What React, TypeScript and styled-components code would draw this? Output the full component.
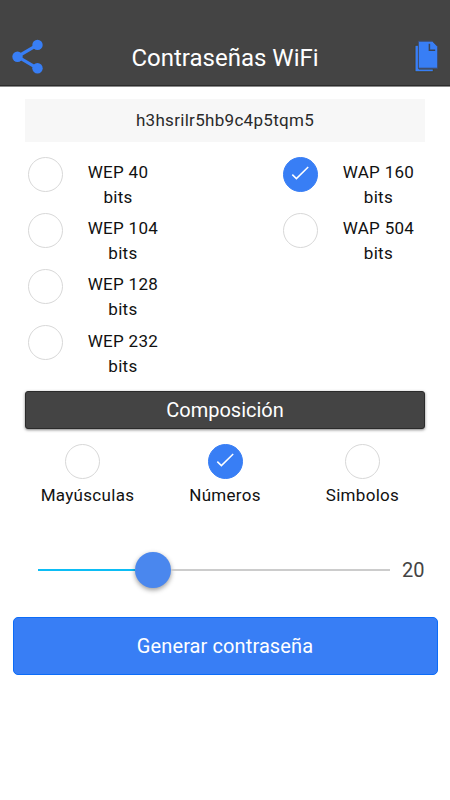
import React, { useState } from "react";
import styled, { createGlobalStyle } from "styled-components";

const GlobalStyle = createGlobalStyle`
  * { box-sizing: border-box; }
  body {
    margin: 0;
    background: #fff;
    color: #111;
    font-family: Roboto, "Liberation Sans", sans-serif;
  }
  button { font-family: inherit; }
`;

const Screen = styled.main`
  display: flex;
  flex-direction: column;
  width: 450px;
  height: 800px;
  overflow: hidden;
  background: #fff;
`;

const Header = styled.header`
  display: flex;
  align-items: flex-end;
  justify-content: space-between;
  height: 87px;
  padding: 0 10px 10px 10px;
  background: #444;
  border-bottom: 1px solid #8a8a8a;
  box-shadow: inset 0 -1px 0 #2c2c2c;
`;

const IconButton = styled.button`
  display: flex;
  width: 36px;
  height: 40px;
  padding: 0;
  border: 0;
  background: transparent;
  svg { display: block; }
`;

const Title = styled.h1`
  margin: 0;
  font-size: 24px;
  font-weight: 400;
  line-height: 36px;
  color: #fff;
`;

const Content = styled.section`
  display: flex;
  flex-direction: column;
  padding: 12px 25px 0;
`;

const Password = styled.output`
  height: 43px;
  line-height: 43px;
  text-align: center;
  font-size: 17px;
  letter-spacing: 0.3px;
  color: #2a2a2a;
  background: #f7f7f7;
`;

const Lengths = styled.div`
  display: grid;
  grid-template-columns: 255px 145px;
  grid-template-rows: repeat(4, 56.2px);
  grid-auto-flow: column;
  margin-top: 14.6px;
`;

const Option = styled.label`
  display: flex;
  align-items: flex-start;
  gap: 25.2px;
  padding-left: 2.5px;
`;

const OptionText = styled.span`
  padding-top: 3.4px;
  font-size: 17px;
  line-height: 25px;
  letter-spacing: 0.3px;
  text-align: center;
  white-space: pre-line;
`;

const Circle = styled.span<{ $on: boolean }>`
  display: flex;
  flex: none;
  align-items: center;
  justify-content: center;
  width: 35px;
  height: 35px;
  border: 1px solid ${(p) => (p.$on ? "#387ef5" : "#d8d8d8")};
  border-radius: 50%;
  background: ${(p) => (p.$on ? "#387ef5" : "#fff")};
`;

const SectionBar = styled.h2`
  height: 37.5px;
  margin: 10px 0 0;
  border: 1px solid #2b2b2b;
  border-radius: 3px;
  background: #444;
  box-shadow: 0 1px 3px rgba(0, 0, 0, 0.5);
  color: #fff;
  font-size: 20px;
  font-weight: 400;
  line-height: 36px;
  text-align: center;
`;

const Kinds = styled.div`
  display: grid;
  grid-template-columns: 125px 150px 125px;
  margin-top: 15px;
`;

const Kind = styled.label`
  display: flex;
  flex-direction: column;
  align-items: center;
  font-size: 17px;
  line-height: 25px;
  letter-spacing: 0.3px;
  gap: 4px;
  &:first-child > span { margin-right: 10px; }
`;

const SliderRow = styled.div`
  display: flex;
  align-items: center;
  height: 44px;
  margin: 40px 0 0 12.5px;
`;

const Track = styled.div`
  display: flex;
  align-items: center;
  width: 352px;
`;

const Line = styled.span<{ $w: number; $filled?: boolean }>`
  width: ${(p) => p.$w}px;
  height: 2.5px;
  background: ${(p) => (p.$filled ? "#0cbdf5" : "#ccc")};
`;

const Thumb = styled.span`
  width: 36px;
  height: 36px;
  border-radius: 50%;
  background: #4a87ee;
  box-shadow: 0 2px 5px rgba(0, 0, 0, 0.4);
`;

const Value = styled.span`
  margin-left: 12.5px;
  font-size: 20px;
  color: #444;
`;

const Generate = styled.button`
  height: 58px;
  margin: 25px 12.5px 0;
  padding: 0;
  border: 1px solid #0c6cf8;
  border-radius: 5px;
  background: #387ef5;
  color: #fff;
  font-size: 20px;
  letter-spacing: 0.1px;
`;

const ShareIcon = () => (
  <svg width="36" height="40" viewBox="0 0 36 40" fill="#387ef5">
    <path d="M27.5 8.8 7.5 20.6 27.5 32.3" fill="none" stroke="#387ef5" strokeWidth="3.2" />
    <circle cx="27.5" cy="8.9" r="5.2" />
    <circle cx="7.5" cy="20.7" r="5.2" />
    <circle cx="27.5" cy="32.3" r="5.2" />
  </svg>
);

const CopyIcon = () => (
  <svg width="36" height="40" viewBox="0 0 36 40">
    <path d="M11 9.2H14.8V33H29.3V35.8H11Z" fill="#387ef5" stroke="#443f29" />
    <path d="M14.4 5.2H28.3L33.6 10.7V32.2H14.4Z" fill="#387ef5" stroke="#3f4e70" />
    <path d="M25.4 7.8V14.2H31.2" fill="none" stroke="#3a4458" strokeWidth="1.5" />
  </svg>
);

const Check = () => (
  <svg width="19" height="16" viewBox="0 0 19 16">
    <path d="M1.3 8.6 5.4 12.6 17.2 1" fill="none" stroke="#fff" strokeWidth="1.5" />
  </svg>
);

const LENGTHS = ["WEP 40", "WEP 104", "WEP 128", "WEP 232", "WAP 160", "WAP 504"];
const KINDS = ["Mayúsculas", "Números", "Simbolos"];

export default function App() {
  const [length, setLength] = useState("WAP 160");
  const [kinds, setKinds] = useState<string[]>(["Números"]);
  const toggle = (k: string) =>
    setKinds((all) => (all.includes(k) ? all.filter((x) => x !== k) : [...all, k]));

  return (
    <>
      <GlobalStyle />
      <Screen>
        <Header>
          <IconButton aria-label="Compartir"><ShareIcon /></IconButton>
          <Title>Contraseñas WiFi</Title>
          <IconButton aria-label="Copiar"><CopyIcon /></IconButton>
        </Header>
        <Content>
          <Password>h3hsrilr5hb9c4p5tqm5</Password>
          <Lengths>
            {LENGTHS.map((name) => (
              <Option key={name} onClick={() => setLength(name)}>
                <Circle $on={name === length}>{name === length && <Check />}</Circle>
                <OptionText>{name + "\nbits"}</OptionText>
              </Option>
            ))}
          </Lengths>
          <SectionBar>Composición</SectionBar>
          <Kinds>
            {KINDS.map((name) => (
              <Kind key={name} onClick={() => toggle(name)}>
                <Circle $on={kinds.includes(name)}>{kinds.includes(name) && <Check />}</Circle>
                {name}
              </Kind>
            ))}
          </Kinds>
          <SliderRow>
            <Track>
              <Line $w={97} $filled />
              <Thumb />
              <Line $w={219} />
            </Track>
            <Value>20</Value>
          </SliderRow>
        </Content>
        <Generate>Generar contraseña</Generate>
      </Screen>
    </>
  );
}
